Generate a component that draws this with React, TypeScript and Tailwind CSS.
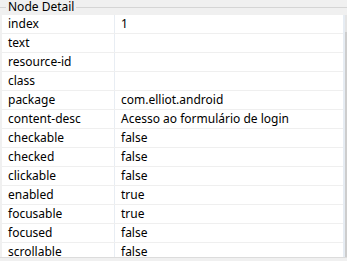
import React from "react";

const rows: [string, string][] = [
  ["index", "1"],
  ["text", ""],
  ["resource-id", ""],
  ["class", ""],
  ["package", "com.elliot.android"],
  ["content-desc", "Acesso ao formulário de login"],
  ["checkable", "false"],
  ["checked", "false"],
  ["clickable", "false"],
  ["enabled", "true"],
  ["focusable", "true"],
  ["focused", "false"],
  ["scrollable", "false"],
];

export default function App() {
  return (
    <div
      className="w-[347px] h-[261px] bg-[#f0f0f0] overflow-hidden text-[12px] text-black"
      style={{ fontFamily: '"Noto Sans", "Open Sans", sans-serif' }}
    >
      {/* group box caption */}
      <div className="relative h-[15px]">
        <div className="absolute left-0 right-0 top-[7px] h-px bg-[#d5d5d5]" />
        <span className="absolute left-[6px] top-[-2px] px-[2px] bg-[#f0f0f0] leading-[17px]">
          Node Detail
        </span>
      </div>
      <div className="flex h-[242px]">
        <div className="w-[2px]" />
        <div className="w-[341px] bg-white overflow-hidden">
          {rows.map(([k, v]) => (
            <div key={k} className="flex h-[19px] border-b border-[#efefef]">
              <div className="w-[113px] pl-[6px] leading-[18px] border-r border-[#e8edf3] whitespace-nowrap">
                {k}
              </div>
              <div className="flex-1 pl-[6px] leading-[18px] whitespace-nowrap">{v}</div>
            </div>
          ))}
        </div>
        <div className="w-[2px] bg-[#e6ecf3]" />
        <div className="w-[2px] flex flex-col">
          <div className="h-[17px] bg-[#e4e4e4]" />
          <div className="flex-1 bg-[#cdcdcd]" />
        </div>
      </div>
      <div className="h-px bg-[#dcdcdc]" />
    </div>
  );
}
